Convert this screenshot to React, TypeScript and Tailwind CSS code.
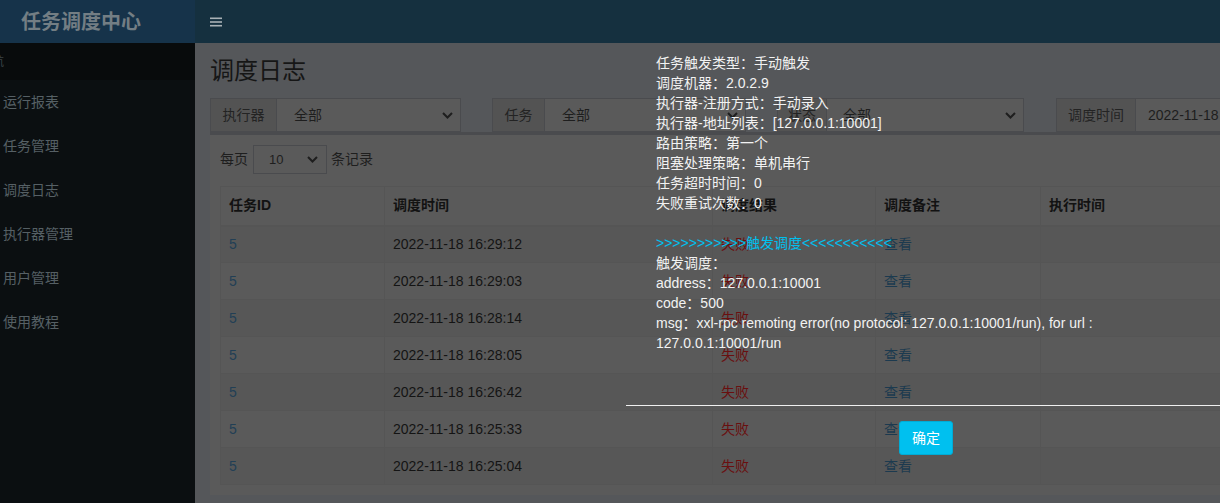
import React from "react";

// Colours are taken as they appear behind the dialog's shade
const menu = ["运行报表", "任务管理", "调度日志", "执行器管理", "用户管理", "使用教程"];
const times = [
    "2022-11-18 16:29:12",
    "2022-11-18 16:29:03",
    "2022-11-18 16:28:14",
    "2022-11-18 16:28:05",
    "2022-11-18 16:26:42",
    "2022-11-18 16:25:33",
    "2022-11-18 16:25:04",
];

const detail = [
    "任务触发类型：手动触发",
    "调度机器：2.0.2.9",
    "执行器-注册方式：手动录入",
    "执行器-地址列表：[127.0.0.1:10001]",
    "路由策略：第一个",
    "阻塞处理策略：单机串行",
    "任务超时时间：0",
    "失败重试次数：0",
];

function Chevron() {
    return (
        <svg width="11" height="7" viewBox="0 0 11 7" className="shrink-0">
            <polyline points="1,1 5.5,5.5 10,1" fill="none" stroke="#1e1e1e" strokeWidth="2" />
        </svg>
    );
}

function FilterGroup({ label, value, width, labelWidth, pad = "pl-[17px]", chevron = true }: {
    label: string; value: string; width: string; labelWidth: string; pad?: string; chevron?: boolean;
}) {
    return (
        <div className={`flex h-[34px] shrink-0 ${width}`}>
            <div className={`flex items-center justify-center border border-[#4a4b4e] bg-[#535353] text-[#232323] ${labelWidth}`}>
                {label}
            </div>
            <div className={`flex flex-1 items-center justify-between border border-l-0 border-[#4a4b4e] bg-[#5a5a5a] pr-[7px] text-[#1e1e1e] ${pad}`}>
                <span>{value}</span>
                {chevron && <Chevron />}
            </div>
        </div>
    );
}

export default function App() {
    return (
        <div className="relative h-[503px] w-[1220px] overflow-hidden font-['Liberation_Sans','Noto_Sans_CJK_SC',sans-serif] text-[14px]">
            <div className="flex h-full flex-col">
                {/* header */}
                <div className="flex h-[43px] shrink-0">
                    <div className="flex w-[195px] items-center bg-[#16334a] pl-[21px] text-[20px] font-bold text-[#737e84]">
                        任务调度中心
                    </div>
                    <div className="flex flex-1 items-center bg-[#15303f] pl-[15px]">
                        <svg width="12" height="10" viewBox="0 0 12 10">
                            <rect x="0" y="0.5" width="12" height="1.6" fill="#a9b1b6" />
                            <rect x="0" y="4.2" width="12" height="1.6" fill="#a9b1b6" />
                            <rect x="0" y="7.9" width="12" height="1.6" fill="#a9b1b6" />
                        </svg>
                    </div>
                </div>

                <div className="flex min-h-0 flex-1">
                    {/* sidebar */}
                    <div className="w-[195px] shrink-0 bg-[#0b0f11]">
                        <div className="flex h-[37px] items-center overflow-hidden bg-[#080b0c] text-[12px] text-[#3b4448]">
                            <span className="ml-[-20px]">导航</span>
                        </div>
                        <ul>
                            {menu.map(m => (
                                <li key={m} className="flex h-[44px] items-center pl-[3px] text-[#566065]">
                                    {m}
                                </li>
                            ))}
                        </ul>
                    </div>

                    {/* content */}
                    <div className="min-w-0 flex-1 overflow-hidden bg-[#55575a] pl-[15px] pt-[15px]">
                        <h1 className="h-[26px] text-[24px] leading-[26px] text-[#161616]">调度日志</h1>

                        <div className="mt-[14px] flex w-[1300px]">
                            <FilterGroup label="执行器" value="全部" width="w-[251px]" labelWidth="w-[67px]" />
                            <div className="w-[31px] shrink-0" />
                            <FilterGroup label="任务" value="全部" width="w-[254px]" labelWidth="w-[53px]" />
                            <div className="w-[31px] shrink-0" />
                            <FilterGroup label="状态" value="全部" width="w-[247px]" labelWidth="w-[50px]" pad="pl-[16px]" />
                            <div className="w-[32px] shrink-0" />
                            <FilterGroup label="调度时间" value="2022-11-18 00:00:00 - 2022-11-18 23:59:59" width="w-[400px]" labelWidth="w-[80px]" pad="pl-[12px]" chevron={false} />
                        </div>

                        <div className="w-[1100px] border-t-[3px] border-[#4a4b4e] bg-[#5a5a5a] p-[10px]">
                            <div className="flex h-[29px] items-center text-[#1e1e1e]">
                                <span>每页</span>
                                <div className="ml-[5px] flex h-[29px] w-[74px] items-center justify-between border border-[#4a4b4e] pl-[15px] pr-[8px]">
                                    <span className="text-[13px]">10</span>
                                    <Chevron />
                                </div>
                                <span className="ml-[4px]">条记录</span>
                            </div>

                            <table className="mt-[12px] w-[1080px] table-fixed border-collapse text-left">
                                <colgroup>
                                    <col className="w-[164px]" />
                                    <col className="w-[328px]" />
                                    <col className="w-[163px]" />
                                    <col className="w-[165px]" />
                                    <col />
                                </colgroup>
                                <thead>
                                    <tr className="h-[39px] border border-b-2 border-[#555555] font-bold text-[#121212]">
                                        {["任务ID", "调度时间", "调度结果", "调度备注", "执行时间"].map(h => (
                                            <th key={h} className="border border-b-2 border-[#555555] px-[8px]">{h}</th>
                                        ))}
                                    </tr>
                                </thead>
                                <tbody>
                                    {times.map((t, i) => (
                                        <tr key={t} className={`h-[37px] ${i % 2 === 0 ? "bg-[#575757]" : "bg-[#5a5a5a]"}`}>
                                            <td className="border border-[#555555] px-[8px] text-[#223f55]">5</td>
                                            <td className="border border-[#555555] px-[8px] text-[#141414]">{t}</td>
                                            <td className="border border-[#555555] px-[8px] text-[#6a0f0f]">失败</td>
                                            <td className="border border-[#555555] px-[8px] text-[#1c3a4f]">查看</td>
                                            <td className="border border-[#555555] px-[8px]"></td>
                                        </tr>
                                    ))}
                                </tbody>
                            </table>
                        </div>
                    </div>
                </div>
            </div>

            {/* trigger log dialog, its box has no background of its own */}
            <div className="absolute left-[626px] top-[53px] w-[600px]">
                <div className="px-[30px] text-[14px] leading-[20px] text-[#f2f2f2]">
                    {detail.map(d => (
                        <div key={d}>{d}</div>
                    ))}
                    <div className="h-[20px]" />
                    <div className="text-[#00c0ef]">&gt;&gt;&gt;&gt;&gt;&gt;&gt;&gt;&gt;&gt;&gt;触发调度&lt;&lt;&lt;&lt;&lt;&lt;&lt;&lt;&lt;&lt;&lt;</div>
                    <div>触发调度：</div>
                    <div>address：127.0.0.1:10001</div>
                    <div>code：500</div>
                    <div>msg：xxl-rpc remoting error(no protocol: 127.0.0.1:10001/run), for url : 127.0.0.1:10001/run</div>
                </div>
                <div className="mt-[52px] flex justify-center border-t border-[#f0f0f0] pt-[15px]">
                    <button className="h-[34px] w-[54px] rounded-[3px] border border-[#00acd6] bg-[#00c0ef] text-[14px] text-white">
                        确定
                    </button>
                </div>
            </div>
        </div>
    );
}
